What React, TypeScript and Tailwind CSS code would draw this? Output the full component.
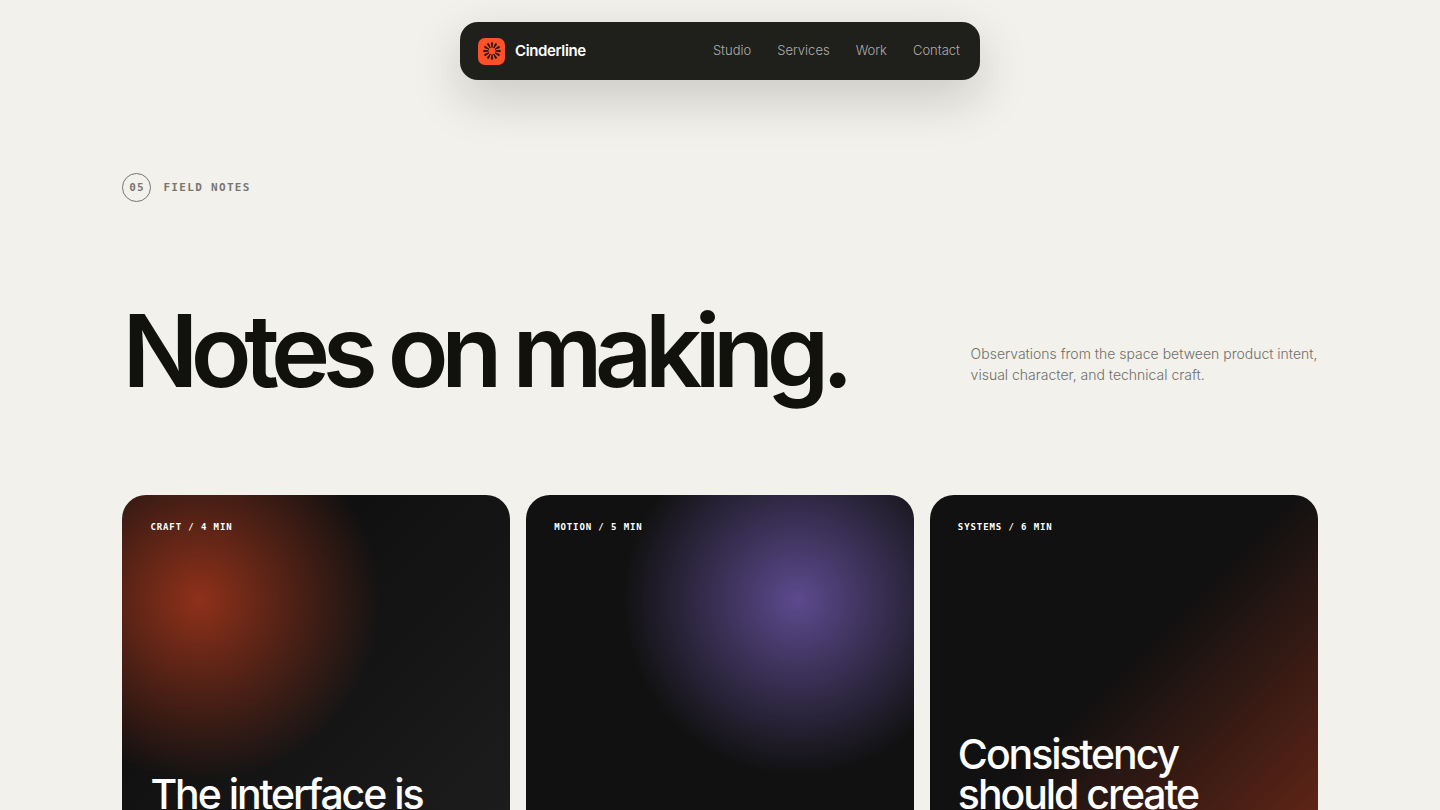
const links = ["Studio", "Services", "Work", "Contact"];

const petals = [0, 30, 60, 90, 120, 150, 180, 210, 240, 270, 300, 330];

const notes = [
  {
    topic: "Craft / 4 min",
    title: "The interface is",
    lines: "pb-[101px]",
    surface:
      "bg-[radial-gradient(circle_at_20%_25%,#8f311a_0%,rgba(143,49,26,0)_41%),linear-gradient(135deg,#101010_30%,#1f1f1f_100%)]",
  },
  {
    topic: "Motion / 5 min",
    title: "",
    lines: "pb-7",
    surface: "bg-[radial-gradient(circle_at_70%_25%,#5c4a8e_0%,#111111_42%)]",
  },
  {
    topic: "Systems / 6 min",
    title: "Consistency should create",
    lines: "pb-[101px]",
    surface: "bg-[linear-gradient(135deg,#111111_45%,#762a18_100%)]",
  },
];

function Mark() {
  return (
    <span className="flex size-[27px] items-center justify-center rounded-[7px] bg-[#ff5129]">
      <svg viewBox="0 0 18 18" className="size-[18px]" aria-hidden="true">
        {petals.map((angle) => (
          <path
            key={angle}
            d="M9 5.6 8.3 1.4Q8.2 0.5 9 0.5T9.7 1.4Z"
            fill="#11110e"
            stroke="#11110e"
            strokeWidth="0.7"
            strokeLinejoin="round"
            transform={`rotate(${angle} 9 9)`}
          />
        ))}
      </svg>
    </span>
  );
}

export default function App() {
  return (
    <div className="h-screen overflow-hidden bg-[#f2f1ec] font-['Inter',sans-serif] text-[#11110e]">
      <header className="flex justify-center px-4 pt-[22px]">
        <nav
          aria-label="Main"
          className="flex h-[58px] w-full max-w-[520px] items-center justify-between rounded-[18px] bg-[#1f1f1c] pr-5 pl-[18px] shadow-[0_18px_50px_rgba(17,17,14,0.18)]"
        >
          <a href="#home" className="flex items-center gap-2.5 text-[15px] font-semibold tracking-tight text-white">
            <Mark />
            Cinderline
          </a>
          <ul className="flex gap-[26px] text-[13px] font-light text-[#b0b0ab]">
            {links.map((link) => (
              <li key={link}>
                <a href={`#${link.toLowerCase()}`}>{link}</a>
              </li>
            ))}
          </ul>
        </nav>
      </header>

      <main className="px-[8.5vw] pt-[93px]">
        <p className="flex items-center gap-3 font-['DejaVu_Sans_Mono',monospace] text-[11px] leading-[18px] font-bold tracking-[0.12em] text-[#77776f] uppercase">
          <span className="flex size-[29px] items-center justify-center rounded-full border border-[#77776f] tracking-widest">
            05
          </span>
          Field notes
        </p>

        <div className="mt-[100px] flex items-end justify-between gap-10">
          <h1 className="text-[100px] leading-[97px] font-semibold tracking-[-0.075em] whitespace-nowrap">
            Notes on making.
          </h1>
          <p className="mb-[14px] w-[347px] shrink-0 text-sm leading-[21px] font-light text-[#6f6f68]">
            Observations from the space between product intent, visual character, and technical craft.
          </p>
        </div>

        <div className="mt-24 grid grid-cols-3 gap-4">
          {notes.map((note) => (
            <article
              key={note.topic}
              className={`flex min-h-[420px] flex-col justify-between rounded-3xl px-7 pt-[26px] text-white ${note.lines} ${note.surface}`}
            >
              <p className="font-['DejaVu_Sans_Mono',monospace] text-[9px] leading-3 font-bold tracking-widest uppercase">
                {note.topic}
              </p>
              {note.title && (
                <h2 className="max-w-[290px] text-[41px] leading-10 font-medium tracking-tighter">{note.title}</h2>
              )}
            </article>
          ))}
        </div>
      </main>
    </div>
  );
}
